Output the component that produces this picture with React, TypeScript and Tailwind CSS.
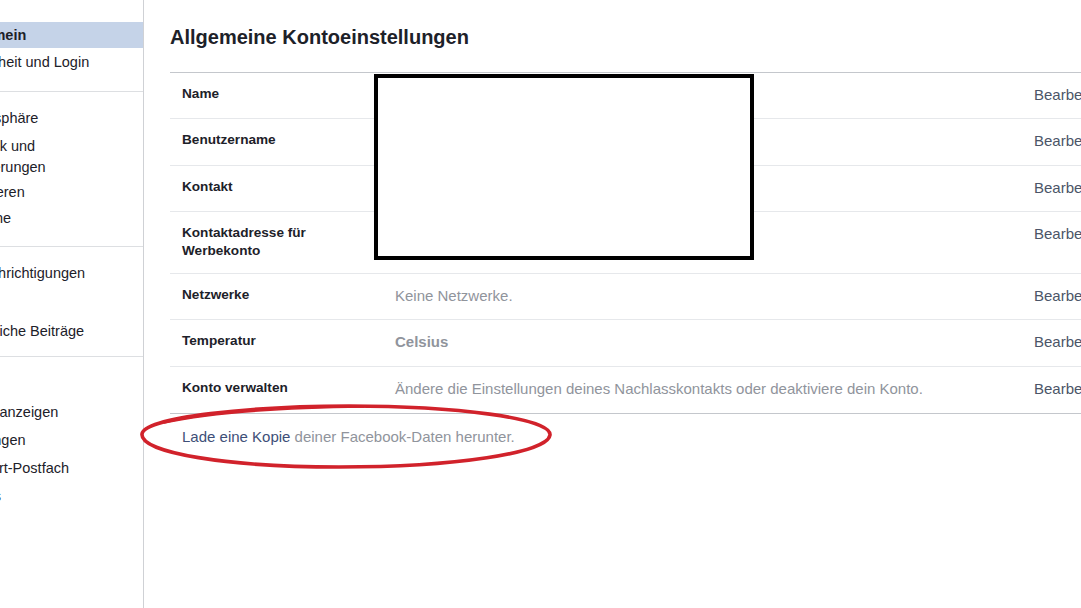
const sections: { items: { label: string; h: string; bold?: boolean; active?: boolean; two?: boolean }[]; cls: string }[] = [
  {
    cls: "pt-[22px] pb-[15px]",
    items: [
      { label: "Allgemein", h: "h-[26px]", bold: true, active: true },
      { label: "Sicherheit und Login", h: "h-[28px]" },
    ],
  },
  {
    cls: "pt-[12px] pb-[15px]",
    items: [
      { label: "Privatsphäre", h: "h-[28px]" },
      { label: "Chronik und Markierungen", h: "h-[46px]", two: true },
      { label: "Blockieren", h: "h-[27px]" },
      { label: "Sprache", h: "h-[26px]" },
    ],
  },
  {
    cls: "pt-[11px] pb-[11px]",
    items: [
      { label: "Benachrichtigungen", h: "h-[29px]" },
      { label: "Mobil", h: "h-[29px]" },
      { label: "Öffentliche Beiträge", h: "h-[29px]" },
    ],
  },
  {
    cls: "pt-[13px] pb-[12px]",
    items: [
      { label: "Apps", h: "h-[28px]" },
      { label: "Werbeanzeigen", h: "h-[28px]" },
      { label: "Zahlungen", h: "h-[28px]" },
      { label: "Support-Postfach", h: "h-[28px]" },
      { label: "Videos", h: "h-[28px]" },
    ],
  },
];

const rows: { label: string[]; value?: string; valueBold?: boolean; h: string }[] = [
  { label: ["Name"], h: "h-[46px]" },
  { label: ["Benutzername"], h: "h-[47px]" },
  { label: ["Kontakt"], h: "h-[46px]" },
  { label: ["Kontaktadresse für", "Werbekonto"], h: "h-[62px]" },
  { label: ["Netzwerke"], value: "Keine Netzwerke.", h: "h-[46px]" },
  { label: ["Temperatur"], value: "Celsius", valueBold: true, h: "h-[47px]" },
  {
    label: ["Konto verwalten"],
    value: "Ändere die Einstellungen deines Nachlasskontakts oder deaktiviere dein Konto.",
    h: "h-[46px]",
  },
];

function Sidebar() {
  return (
    <div className="w-[144px] shrink-0 h-full border-r border-[#cfd1d5] overflow-hidden">
      {sections.map((s, i) => (
        <div key={i} className={`${s.cls} ${i < sections.length - 1 ? "border-b border-[#dddfe2]" : ""}`}>
          {s.items.map((it) => (
            <div
              key={it.label}
              className={`${it.h} flex ${it.two ? "items-start pt-[4px]" : "items-center"} ${
                it.active ? "bg-[#c5d3e8]" : ""
              }`}
            >
              <div
                className={`ml-[-43px] whitespace-nowrap text-[14.5px] text-[#1d2129] ${
                  it.two ? "leading-[21px]" : "leading-[18px]"
                } ${it.bold ? "font-bold" : ""}`}
              >
                {it.two ? (
                  <>
                    Chronik und
                    <br />
                    Markierungen
                  </>
                ) : (
                  it.label
                )}
              </div>
            </div>
          ))}
        </div>
      ))}
    </div>
  );
}

export default function App() {
  return (
    <div
      className="relative w-[1081px] h-[608px] overflow-hidden bg-white flex"
      style={{ fontFamily: '"Liberation Sans", Arial, sans-serif' }}
    >
      <Sidebar />
      <div className="flex-1 pl-[26px] min-w-0">
        <h1 className="mt-[25px] h-[24px] text-[20px] leading-[24px] font-bold text-[#1d2129] whitespace-nowrap">
          Allgemeine Kontoeinstellungen
        </h1>
        <div className="mt-[23px] w-[1000px] border-t border-b border-[#c4c7cc]">
          {rows.map((r, i) => (
            <div
              key={i}
              className={`${r.h} grid grid-cols-[225px_639px_auto] ${
                i < rows.length - 1 ? "border-b border-[#e6e8eb]" : ""
              }`}
            >
              <div className="pl-[12px] pt-[12px] text-[13.6px] leading-[18px] font-bold text-[#1d2129]">
                {r.label.map((l) => (
                  <div key={l}>{l}</div>
                ))}
              </div>
              <div
                className={`pt-[12px] text-[15px] leading-[20px] text-[#90949c] whitespace-nowrap ${
                  r.valueBold ? "font-bold" : ""
                }`}
              >
                {r.value}
              </div>
              <div className="pt-[12px] text-[15px] leading-[20px] text-[#4b5568] whitespace-nowrap">
                Bearbeiten
              </div>
            </div>
          ))}
        </div>
        <div className="pl-[12px] pt-[13px] text-[15px] leading-[20px] text-[#90949c] whitespace-nowrap">
          <span className="text-[#3e4f78]">Lade eine Kopie</span> deiner Facebook-Daten herunter.
        </div>
      </div>

      {/* redaction box */}
      <div className="absolute left-[374px] top-[74px] w-[380px] h-[186px] border-4 border-black bg-white" />

      {/* red marker ellipse */}
      <svg
        className="absolute left-[134px] top-[401px]"
        width="424"
        height="72"
        viewBox="0 0 424 72"
      >
        <path
          d="M 8 33 C 10 16, 120 5, 215 5 C 320 5, 418 17, 416 34 C 414 52, 320 66, 205 66 C 95 66, 6 52, 8 33 Z"
          fill="none"
          stroke="#d1222b"
          strokeWidth="3.6"
        />
        <path
          d="M 30 22 C 80 11, 150 7, 230 6"
          fill="none"
          stroke="#d1222b"
          strokeWidth="1.6"
        />
      </svg>
    </div>
  );
}
